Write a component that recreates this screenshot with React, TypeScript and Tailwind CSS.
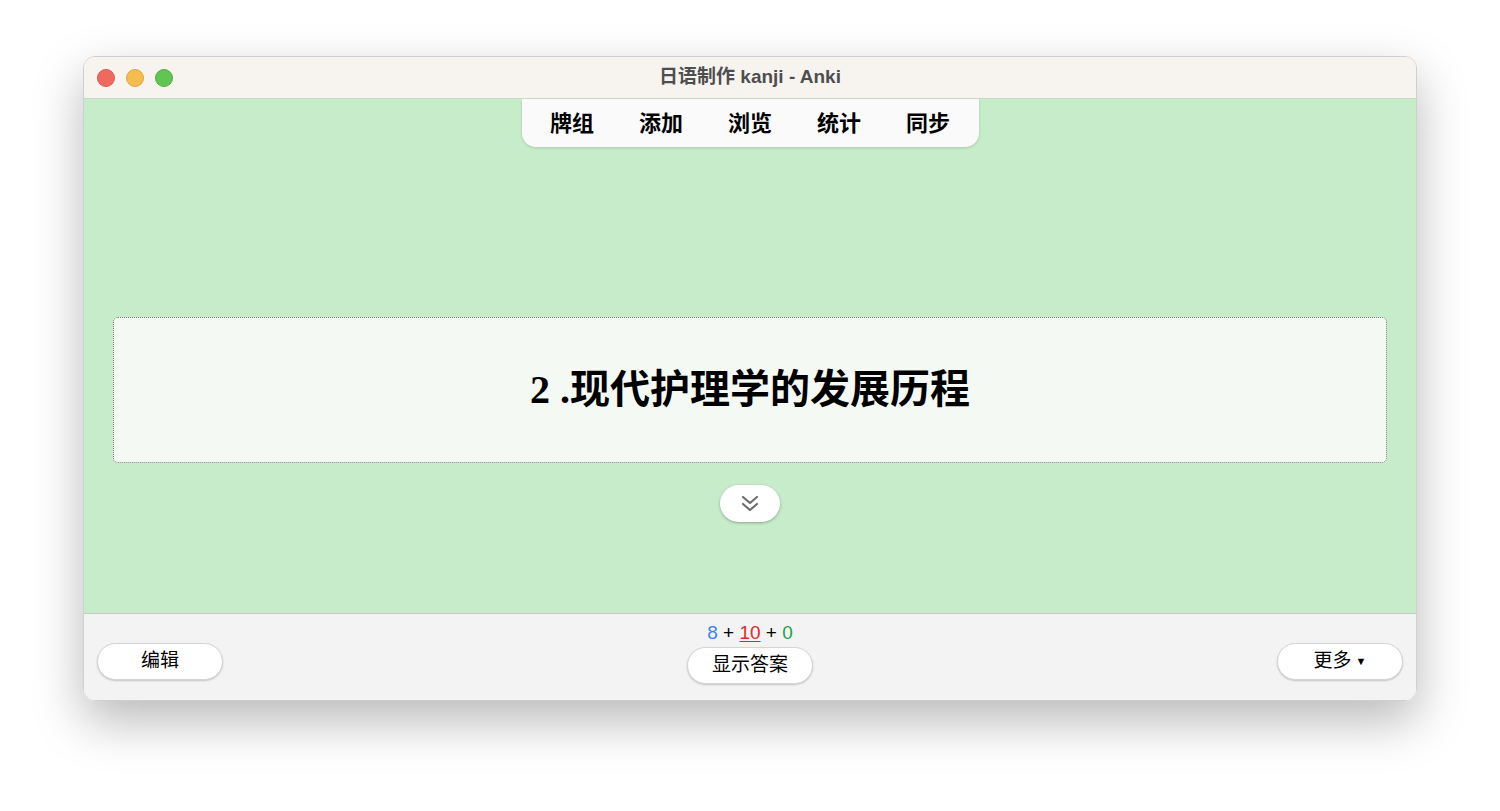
const sans = { fontFamily: '"Liberation Sans", "Noto Sans CJK SC", sans-serif' };

const navItems = ["牌组", "添加", "浏览", "统计", "同步"];

const PillButton = ({ children, className = "" }: { children: React.ReactNode; className?: string }) => (
	<button
		className={`h-[37px] w-[126px] rounded-full border border-[#d4d4d4] bg-white text-[19px] text-black shadow-[0_1px_2px_rgba(0,0,0,0.2)] flex items-center justify-center gap-1 ${className}`}
	>
		{children}
	</button>
);

// double chevron, drawn to match the reveal button
const DoubleChevron = () => (
	<svg width="22" height="20" viewBox="0 0 22 20" fill="none" stroke="#6e6e6e" strokeWidth="2.2" strokeLinecap="round" strokeLinejoin="round">
		<polyline points="4,3 11,9 18,3" />
		<polyline points="4,10 11,16 18,10" />
	</svg>
);

const App = () => {
	return (
		<div className="w-[1500px] h-[811px] bg-white pt-[56px] pl-[83px]" style={sans}>
			<div className="w-[1334px] h-[645px] rounded-[12px] overflow-hidden border border-[#cfcfcf] shadow-[0_20px_50px_rgba(0,0,0,0.28)] flex flex-col">
				{/* title bar */}
				<div className="h-[42px] bg-[#f7f4f0] border-b border-[#c5d9c5] flex items-center px-3 relative shrink-0">
					<div className="flex gap-[11px] pl-px">
						<span className="w-[18px] h-[18px] rounded-full bg-[#ee6a5f] border border-[#d9594f]" />
						<span className="w-[18px] h-[18px] rounded-full bg-[#f5bd4f] border border-[#dea63c]" />
						<span className="w-[18px] h-[18px] rounded-full bg-[#61c554] border border-[#52ad45]" />
					</div>
					<div className="absolute inset-0 flex items-center justify-center text-[19px] font-bold text-[#4e4e4e]">
						日语制作 kanji - Anki
					</div>
				</div>

				{/* main area */}
				<div className="flex-1 bg-[#c7ecca] flex flex-col items-center">
					<nav className="flex px-[6px] h-[48px] items-center bg-[#fafafa] rounded-b-[14px] shadow-[0_1px_3px_rgba(0,0,0,0.15)]">
						{navItems.map((item) => (
							<span key={item} className="w-[89px] text-center text-[22px] font-bold text-black">
								{item}
							</span>
						))}
					</nav>
					<div className="mt-[170px] w-[1274px] h-[146px] rounded-[5px] border border-dotted border-[#777] bg-[#f4f9f4] flex items-center justify-center">
						<h1
							className="text-[40px] font-bold text-black"
							style={{ fontFamily: '"Liberation Serif", "Noto Sans CJK SC", serif' }}
						>
							2 .现代护理学的发展历程
						</h1>
					</div>
					<button className="mt-[22px] w-[60px] h-[37px] rounded-full bg-white shadow-[0_1px_3px_rgba(0,0,0,0.3)] flex items-center justify-center">
						<DoubleChevron />
					</button>
				</div>

				{/* bottom bar */}
				<div className="h-[87px] bg-[#f3f3f3] border-t border-[#c8c8c8] flex items-start justify-between px-[13px] shrink-0">
					<PillButton className="mt-[29px]">编辑</PillButton>
					<div className="flex flex-col items-center pt-[7px]">
						<div className="text-[19px] leading-[24px] text-black">
							<span className="text-[#3b82f6]">8</span> +{" "}
							<span className="text-[#e5262a] underline underline-offset-2">10</span> +{" "}
							<span className="text-[#1fa24a]">0</span>
						</div>
						<PillButton className="mt-[2px]">显示答案</PillButton>
					</div>
					<PillButton className="mt-[29px]">
						更多
						<span className="text-[11px]">▼</span>
					</PillButton>
				</div>
			</div>
		</div>
	);
};

export default App;
